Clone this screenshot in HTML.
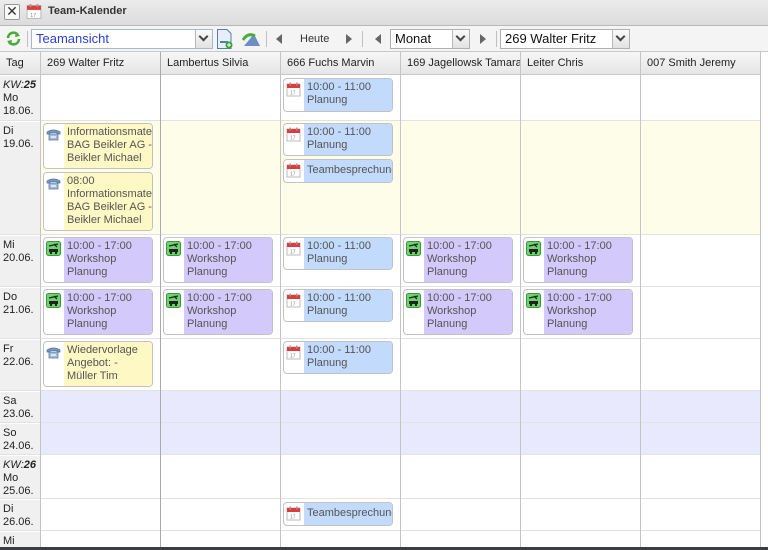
<!DOCTYPE html>
<html><head><meta charset="utf-8"><style>
*{box-sizing:border-box;margin:0;padding:0}
body{width:768px;height:550px;overflow:hidden;background:#fff;font-family:"Liberation Sans",sans-serif;position:relative;font-size:11px;color:#222}
.a{position:absolute}
.title{left:0;top:0;width:768px;height:26px;background:linear-gradient(#ececec,#dcdcdc);border-bottom:1px solid #b8b8b8}
.tb{left:0;top:26px;width:768px;height:26px;background:#f4f4f4;border-bottom:1px solid #c8c8c8}
.sel{position:absolute;height:20px;top:3px;background:#fff;border:1px solid #a9b6cc;font-size:13px;line-height:18px;padding-left:4px;color:#111}
.sel .dd{position:absolute;right:0;top:0;width:17px;height:18px;border-left:1px solid #b8b8b8;background:linear-gradient(#fafafa,#e2e2e2)}
.sel .dd:after{content:"";position:absolute;left:4px;top:5px;width:5px;height:5px;border-right:2px solid #444;border-bottom:2px solid #444;transform:rotate(45deg);top:3px}
.sep{position:absolute;top:5px;width:1px;height:16px;background:#c0c0c0}
.tl{position:absolute;top:8px;width:0;height:0;border-top:5px solid transparent;border-bottom:5px solid transparent;border-right:6px solid #666}
.tr{position:absolute;top:8px;width:0;height:0;border-top:5px solid transparent;border-bottom:5px solid transparent;border-left:6px solid #666}
.hd{top:52px;height:23px;background:linear-gradient(#f6f6f6,#e6e6e6);border-bottom:1px solid #c8c8c8;border-right:1px solid #c8c8c8;font-size:11px;line-height:23px;padding-left:6px;color:#222;white-space:nowrap;overflow:hidden}
.vl{position:absolute;top:52px;width:1px;height:495px;background:#c4c4c4}
.hl{position:absolute;left:0;width:760px;height:1px;background:#e2e2e2}
.tag{position:absolute;left:0;width:40px;background:#f0f0f0;font-size:11px;line-height:13px;padding:3px 0 0 3px;color:#222}
.ev{position:absolute;border:1px solid #c2c2c2;border-radius:4px;background:#fff;overflow:hidden}
.ev .t{position:absolute;left:20px;top:0;right:0;bottom:0;padding:2px 0 0 3px;font-size:11px;line-height:13px;color:#555;white-space:nowrap;overflow:hidden}
.b .t{background:#c2dafb}.y .t{background:#fef8c4}.p .t{background:#d3c9fb}
.ic{position:absolute;left:2px;top:3px;width:15px;height:15px}
</style></head><body>
<svg width="0" height="0" style="position:absolute"><defs>
<symbol id="cal" viewBox="0 0 15 15"><rect x="1" y="2" width="13" height="12" fill="#fff" stroke="#bbb"/><rect x="1" y="2" width="13" height="4" fill="#e03a3a"/><rect x="3.5" y="0.5" width="1.5" height="3" fill="#999"/><rect x="10" y="0.5" width="1.5" height="3" fill="#999"/><text x="4" y="12.5" font-size="5" fill="#888" font-family="Liberation Sans">17</text></symbol>
<symbol id="tel" viewBox="0 0 15 15"><path d="M1 5 Q7.5 1 14 5 L14 7 L11 7 L11 5.5 L4 5.5 L4 7 L1 7Z" fill="#7d9cc4" stroke="#4d6d96" stroke-width=".7"/><rect x="3" y="7" width="9" height="6" fill="#a3bcd9" stroke="#4d6d96" stroke-width=".7"/><rect x="5" y="9" width="5" height="2" fill="#dde8f4"/></symbol>
<symbol id="car" viewBox="0 0 15 15"><rect x="0.5" y="0.5" width="14" height="14" rx="2" fill="#6fd46f" stroke="#3a9a3a"/><path d="M3 5 L12 3 M8 3 L11 6" stroke="#222" stroke-width="1.3"/><rect x="3" y="8" width="9" height="3" fill="#222"/><circle cx="5" cy="12" r="1.2" fill="#222"/><circle cx="10" cy="12" r="1.2" fill="#222"/></symbol>
</defs></svg>

<div class="a title"></div>
<div class="a" style="left:4px;top:4px;width:16px;height:16px;border:1px solid #999;border-radius:2px;background:#f8f8f8;font-size:14px;line-height:13px;text-align:center;color:#333">✕</div>
<svg class="a" style="left:26px;top:3px" width="16" height="17"><use href="#cal"/></svg>
<div class="a" style="left:48px;top:5px;font-size:11px;font-weight:bold;color:#333">Team-Kalender</div>

<div class="a tb">
<svg style="position:absolute;left:5px;top:4px" width="17" height="17" viewBox="0 0 17 17"><path d="M3 8 A5.5 5.5 0 0 1 13 5" stroke="#4caa3a" stroke-width="2.6" fill="none"/><path d="M11 2 L15 6 L10 7Z" fill="#4caa3a"/><path d="M14 9 A5.5 5.5 0 0 1 4 12" stroke="#4caa3a" stroke-width="2.6" fill="none"/><path d="M6 15 L2 11 L7 10Z" fill="#4caa3a"/></svg>
<div class="sep" style="left:27px"></div>
<div class="sel" style="left:31px;width:182px;color:#2b3fd6">Teamansicht<div class="dd"></div></div>
<svg style="position:absolute;left:216px;top:3px" width="17" height="20" viewBox="0 0 17 20"><path d="M1.5 .5 H11 L15 4.5 V19.5 H1.5Z" fill="#e6eef9" stroke="#5a7bb0"/><rect x="4" y="12" width="8" height="2" fill="#5a7bb0"/><circle cx="13" cy="16" r="3.5" fill="#3aa03a"/><path d="M11 16 H15 M13 14 V18" stroke="#fff"/></svg>
<svg style="position:absolute;left:242px;top:5px" width="19" height="16" viewBox="0 0 19 16"><path d="M2 15 L12 3 L18 15Z" fill="#6b8fc4"/><path d="M1 9 Q6 1 13 5" stroke="#4caa3a" stroke-width="3" fill="none"/></svg>
<div class="sep" style="left:266px"></div>
<div class="tl" style="left:276px"></div>
<div style="position:absolute;left:300px;top:7px;font-size:11px;color:#333">Heute</div>
<div class="tr" style="left:346px"></div>
<div class="sep" style="left:362px"></div>
<div class="tl" style="left:375px"></div>
<div class="sel" style="left:390px;width:80px;border-color:#b0b0b0">Monat<div class="dd"></div></div>
<div class="tr" style="left:480px"></div>
<div class="sep" style="left:496px"></div>
<div class="sel" style="left:500px;width:130px;border-color:#b0b0b0">269 Walter Fritz<div class="dd"></div></div>
</div>

<!-- row backgrounds -->
<div class="a" style="left:41px;top:121px;width:719px;height:114px;background:#fefdea"></div>
<div class="a" style="left:41px;top:391px;width:719px;height:64px;background:#e8e9fc"></div>

<!-- headers -->
<div class="a hd" style="left:0;width:41px">Tag</div>
<div class="a hd" style="left:41px;width:120px">269 Walter Fritz</div>
<div class="a hd" style="left:161px;width:120px">Lambertus Silvia</div>
<div class="a hd" style="left:281px;width:120px">666 Fuchs Marvin</div>
<div class="a hd" style="left:401px;width:120px">169 Jagellowsk Tamara</div>
<div class="a hd" style="left:521px;width:120px">Leiter Chris</div>
<div class="a hd" style="left:641px;width:120px">007 Smith Jeremy</div>

<!-- tag column -->
<div class="tag" style="top:76px;height:45px"><i>KW:</i><b><i>25</i></b><br>Mo<br>18.06.</div>
<div class="tag" style="top:122px;height:113px">Di<br>19.06.</div>
<div class="tag" style="top:236px;height:51px">Mi<br>20.06.</div>
<div class="tag" style="top:288px;height:51px">Do<br>21.06.</div>
<div class="tag" style="top:340px;height:51px">Fr<br>22.06.</div>
<div class="tag" style="top:392px;height:31px">Sa<br>23.06.</div>
<div class="tag" style="top:424px;height:31px">So<br>24.06.</div>
<div class="tag" style="top:456px;height:43px"><i>KW:</i><b><i>26</i></b><br>Mo<br>25.06.</div>
<div class="tag" style="top:500px;height:31px">Di<br>26.06.</div>
<div class="tag" style="top:532px;height:15px">Mi</div>

<!-- lines -->
<div class="hl" style="top:120px"></div><div class="hl" style="top:234px"></div><div class="hl" style="top:286px"></div><div class="hl" style="top:338px"></div><div class="hl" style="top:390px"></div><div class="hl" style="top:422px"></div><div class="hl" style="top:454px"></div><div class="hl" style="top:498px"></div><div class="hl" style="top:530px"></div>
<div class="vl" style="left:40px"></div><div class="vl" style="left:160px;background:#aaa"></div><div class="vl" style="left:280px"></div><div class="vl" style="left:400px"></div><div class="vl" style="left:520px"></div><div class="vl" style="left:640px"></div><div class="vl" style="left:760px"></div>

<!-- events -->
<div class="ev b" style="left:283px;top:78px;width:110px;height:34px"><svg class="ic"><use href="#cal"/></svg><div class="t">10:00 - 11:00<br>Planung</div></div>

<div class="ev y" style="left:43px;top:123px;width:110px;height:46px"><svg class="ic"><use href="#tel"/></svg><div class="t">Informationsmaterial<br>BAG Beikler AG -<br>Beikler Michael</div></div>
<div class="ev y" style="left:43px;top:172px;width:110px;height:59px"><svg class="ic"><use href="#tel"/></svg><div class="t">08:00<br>Informationsmaterial<br>BAG Beikler AG -<br>Beikler Michael</div></div>
<div class="ev b" style="left:283px;top:123px;width:110px;height:33px"><svg class="ic"><use href="#cal"/></svg><div class="t">10:00 - 11:00<br>Planung</div></div>
<div class="ev b" style="left:283px;top:159px;width:110px;height:24px"><svg class="ic"><use href="#cal"/></svg><div class="t" style="padding-top:4px">Teambesprechung</div></div>

<div class="ev p" style="left:43px;top:237px;width:110px;height:46px"><svg class="ic"><use href="#car"/></svg><div class="t">10:00 - 17:00<br>Workshop<br>Planung</div></div>
<div class="ev p" style="left:163px;top:237px;width:110px;height:46px"><svg class="ic"><use href="#car"/></svg><div class="t">10:00 - 17:00<br>Workshop<br>Planung</div></div>
<div class="ev b" style="left:283px;top:237px;width:110px;height:33px"><svg class="ic"><use href="#cal"/></svg><div class="t">10:00 - 11:00<br>Planung</div></div>
<div class="ev p" style="left:403px;top:237px;width:110px;height:46px"><svg class="ic"><use href="#car"/></svg><div class="t">10:00 - 17:00<br>Workshop<br>Planung</div></div>
<div class="ev p" style="left:523px;top:237px;width:110px;height:46px"><svg class="ic"><use href="#car"/></svg><div class="t">10:00 - 17:00<br>Workshop<br>Planung</div></div>

<div class="ev p" style="left:43px;top:289px;width:110px;height:46px"><svg class="ic"><use href="#car"/></svg><div class="t">10:00 - 17:00<br>Workshop<br>Planung</div></div>
<div class="ev p" style="left:163px;top:289px;width:110px;height:46px"><svg class="ic"><use href="#car"/></svg><div class="t">10:00 - 17:00<br>Workshop<br>Planung</div></div>
<div class="ev b" style="left:283px;top:289px;width:110px;height:33px"><svg class="ic"><use href="#cal"/></svg><div class="t">10:00 - 11:00<br>Planung</div></div>
<div class="ev p" style="left:403px;top:289px;width:110px;height:46px"><svg class="ic"><use href="#car"/></svg><div class="t">10:00 - 17:00<br>Workshop<br>Planung</div></div>
<div class="ev p" style="left:523px;top:289px;width:110px;height:46px"><svg class="ic"><use href="#car"/></svg><div class="t">10:00 - 17:00<br>Workshop<br>Planung</div></div>

<div class="ev y" style="left:43px;top:341px;width:110px;height:46px"><svg class="ic"><use href="#tel"/></svg><div class="t">Wiedervorlage<br>Angebot: -<br>Müller Tim</div></div>
<div class="ev b" style="left:283px;top:341px;width:110px;height:33px"><svg class="ic"><use href="#cal"/></svg><div class="t">10:00 - 11:00<br>Planung</div></div>

<div class="ev b" style="left:283px;top:502px;width:110px;height:24px"><svg class="ic"><use href="#cal"/></svg><div class="t" style="padding-top:4px">Teambesprechung</div></div>

<div class="a" style="left:0;top:547px;width:768px;height:3px;background:#3c3c44"></div>
</body></html>
